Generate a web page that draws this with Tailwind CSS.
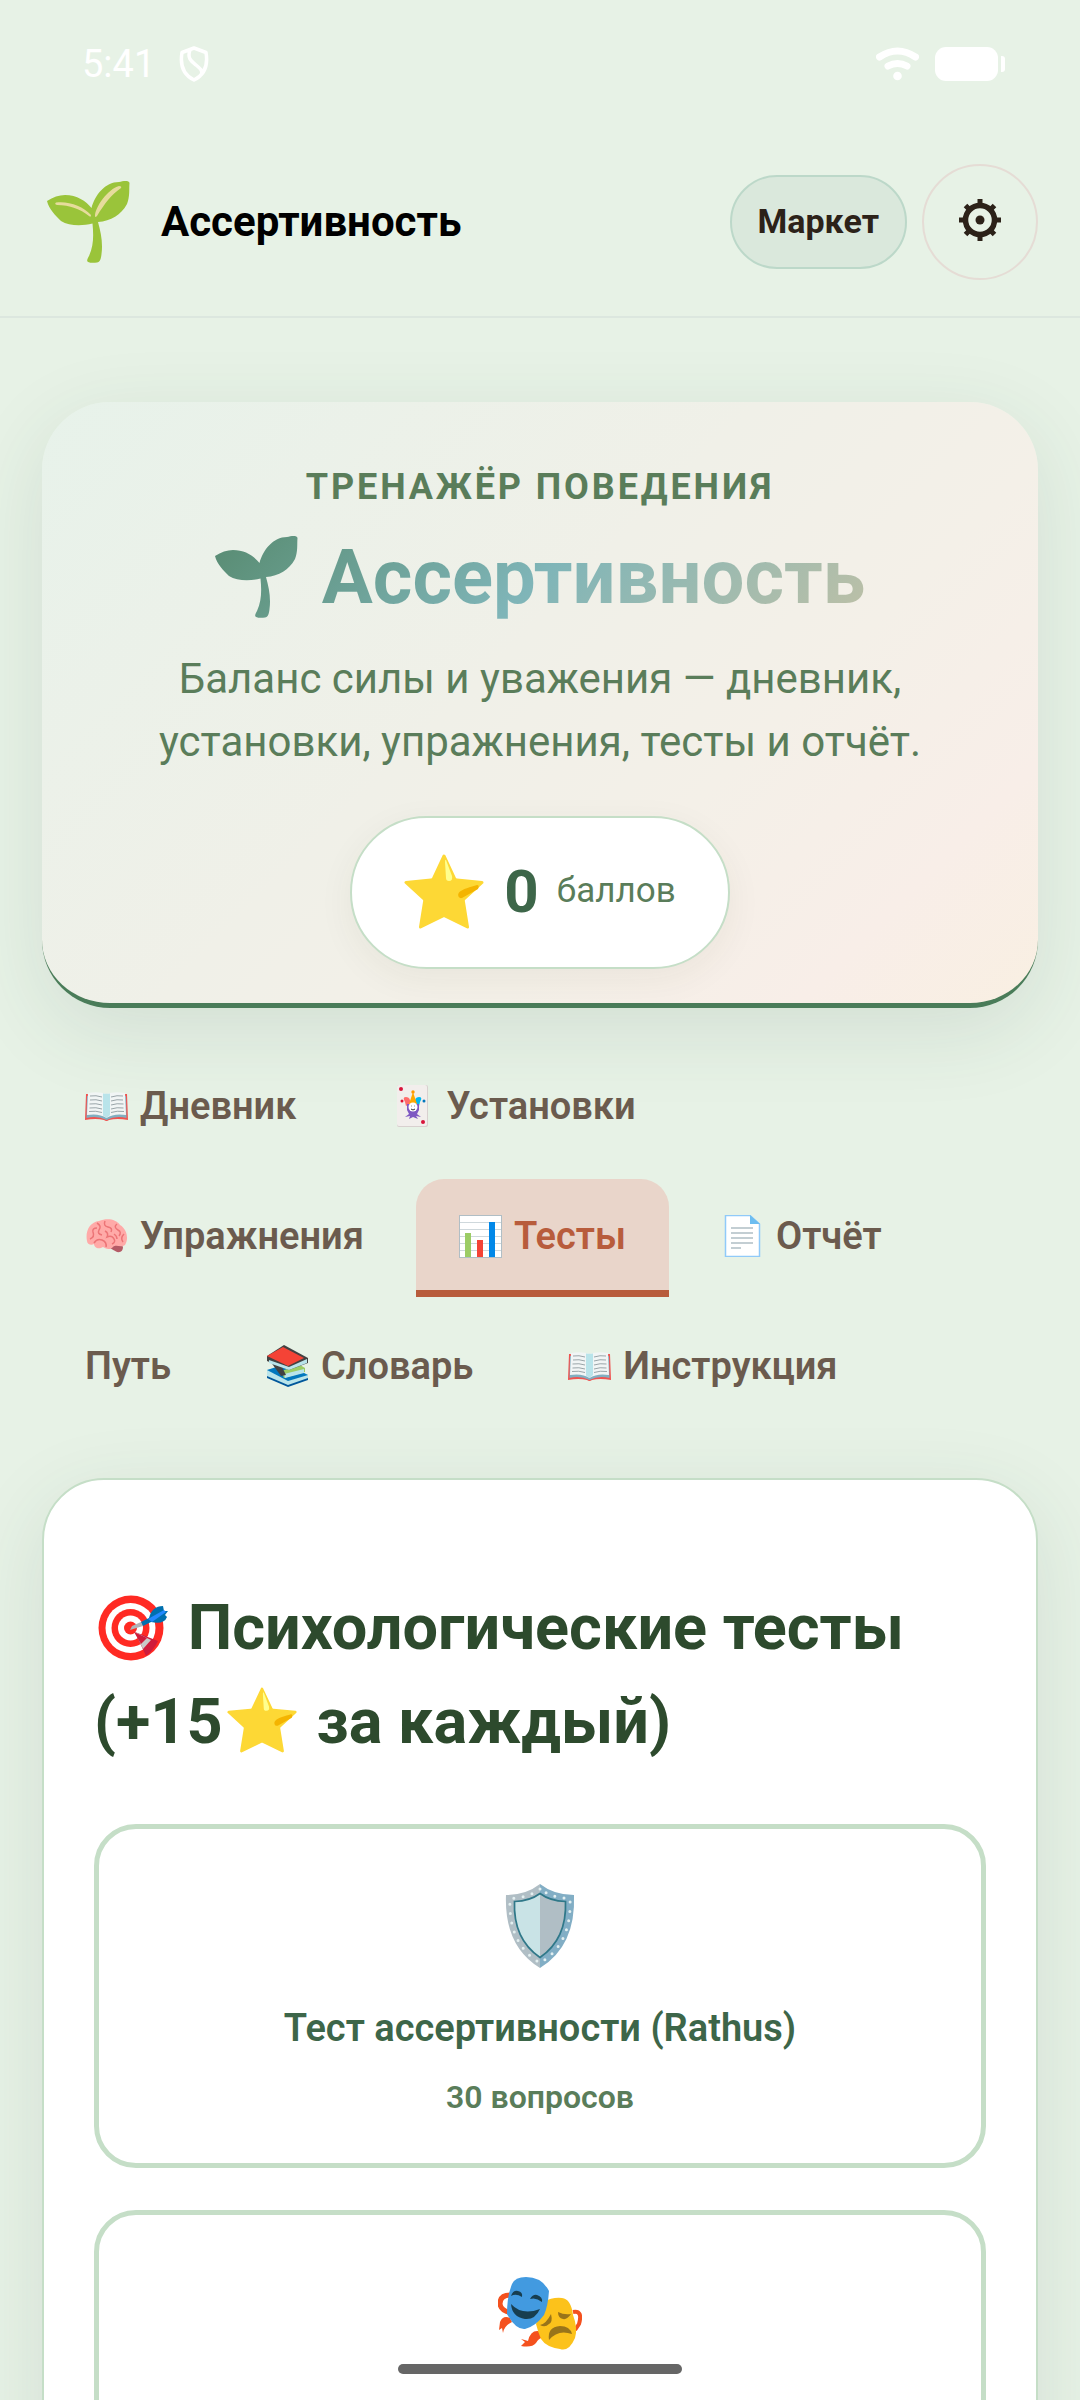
<!DOCTYPE html>
<html lang="ru">

<head>
  <meta charset="UTF-8" />
  <meta name="viewport" content="width=device-width, initial-scale=1.0" />
  <title>Ассертивность</title>
  <script src="https://cdn.jsdelivr.net/npm/@tailwindcss/browser@4"></script>
</head>

<body class="bg-[#e7f2e6] font-['Roboto',sans-serif]">

  <!-- shared icons -->
  <svg class="hidden" aria-hidden="true">
    <symbol id="sprout" viewBox="0 0 83 82">
      <path d="M0 20C6 16 12 14 18 14C30 14 39 20 44.500 27C48 14 58 1 72 1C76 0 82 -1 82.500 2C82 8 83 16 80 23C74 34 64 40 51 41C54 52 56 62 54.500 73C54 78 53 81 50 81.500C47 82 43 82 41 81C39 80 41 77 42 75C47 64 46.500 53 45.500 42.500C35 45 22 45 14 40C8 34 2 28 0 20Z" />
    </symbol>
    <symbol id="star" viewBox="0 0 80 75">
      <path d="M40 2L50.500 24.500Q51 26 53 26L78 28.500L60 45Q59 46 59.500 48L63.500 73L40 61.500L16.500 73L20.500 48Q21 46 20 45L2 28.500L27 26Q29 26 29.500 24.500Z" fill="#fdd835" stroke="#fdd835" stroke-width="3" stroke-linejoin="round" />
      <path d="M42 6L48 22Q49 27 45 27Q42 27 42 24L41 8Q41 5 42 6Z" fill="#ffff8d" />
      <path d="M73 31C75 31 75 33 74 35L58 44C55 45 53 41 55 38.500C58 35 67 33 73 31Z" fill="#f4b400" />
    </symbol>
    <symbol id="book" viewBox="0 0 43 29">
      <path d="M1 2H42L43 28Q32 26 24 28Q21.500 30 19 28Q11 26 0 28Z" fill="#ef5350" />
      <path d="M2 4L1.500 26Q12 23 21.500 28Q31 23 41.500 26L41 4L22 8Z" fill="#82aec0" />
      <path d="M3 1Q14 -1 21.500 2Q29 -1 40 1L41 23Q29 21 21.500 26Q14 21 2 23Z" fill="#f1f5f5" />
      <path d="M18 1.500Q21.500 2 25 1.500V23L21.500 26L18 23.500Z" fill="#b9e4ea" />
      <path d="M5 4Q11 3 17 5M5 8Q11 7 17 9M4.500 12Q11 11 17 13M4.500 16Q11 15 17 17M4 19.500Q11 18.500 17 20.500M38 4Q32 3 26 5M38 8Q32 7 26 9M38.500 12Q32 11 26 13M38.500 16Q32 15 26 17M39 19.500Q32 18.500 26 20.500" fill="none" stroke="#9aa5a9" stroke-width="1" />
    </symbol>
  </svg>

  <div class="h-screen overflow-hidden flex flex-col">

    <!-- status bar -->
    <div class="shrink-0 h-32 flex items-center justify-between pl-[82px] pr-[75px] text-white">
      <div class="flex items-center gap-6 text-[38px]">
        <span>5:41</span>
        <svg class="w-[30px] h-9" viewBox="0 0 30 36" fill="none" stroke="currentColor" stroke-width="3.500" stroke-linejoin="round" stroke-linecap="round">
          <path d="M15 2L3 6.500C1 18 3 28 15 34C27 28 29 18 27 6.500ZM11 4C8 12 12 15 17 19C22 23 24 25 22 29" />
        </svg>
      </div>
      <div class="flex items-center gap-4">
        <svg class="w-[43px] h-[34px]" viewBox="0 0 43 34" fill="none" stroke="currentColor" stroke-width="7" stroke-linecap="round">
          <path d="M3.500 10Q21.500 -2 39.500 10M12 19Q21.500 14 31 19" />
          <circle cx="21.500" cy="29" r="4.300" fill="currentColor" stroke="none" />
        </svg>
        <svg class="w-[70px] h-[34px]" viewBox="0 0 70 34" fill="currentColor">
          <rect width="63" height="34" rx="11" />
          <path d="M66 9H67Q70 9 70 12V22Q70 25 67 25H66Z" />
        </svg>
      </div>
    </div>

    <header class="shrink-0 flex items-center justify-between pl-[47px] pr-[42px] py-9 border-b-2 border-[#dce7df]">
      <div class="flex items-center gap-[31px]">
        <svg class="w-[83px] h-[82px]" viewBox="0 0 83 82">
          <use href="#sprout" fill="#9ac43a" />
          <path d="M9 21.500C22 20 36 25 44 34Q44 37 42 35C33 28 23 24 10 24Q7 23 9 21.500ZM48 35C48 26 61 8 72 5Q75 5 74 7C64 14 58 22 50 35Q48 37 48 35Z" fill="#e6dc9c" />
        </svg>
        <span class="pb-[2px] text-[42px] font-bold text-black">Ассертивность</span>
      </div>
      <div class="flex items-center gap-[15px]">
        <button class="h-[94px] px-[26px] pb-[2px] rounded-full border-2 border-[#bcd8c9] bg-[#dae8dc] text-[34px] font-bold text-[#2c2219]">Маркет</button>
        <button class="size-[116px] pb-1 rounded-full border-2 border-[#e5dcd5] flex items-center justify-center" aria-label="Настройки">
          <svg class="size-[42px]" viewBox="-21 -21 42 42" fill="none" stroke="#2c2219">
            <circle r="14.500" stroke-width="5.500" />
            <circle r="4.500" fill="#2c2219" stroke="none" />
            <path d="M0 -21V-15M0 21V15M-21 0H-15M21 0H15M-14.500 -14.500L-11 -11M14.500 -14.500L11 -11M-14.500 14.500L-11 11M14.500 14.500L11 11" stroke-width="5" />
          </svg>
        </button>
      </div>
    </header>

    <main class="px-[42px] pt-[84px]">

      <section class="px-[42px] pt-[58px] pb-[34px] rounded-[68px] border-b-5 border-[#4a7c59] bg-[linear-gradient(135deg,#e7f2ea_0%,#f0f0e8_45%,#f4f0e8_66%,#f8eee8_85%,#f9efe2_100%)] shadow-[0_22px_84px_rgba(45,74,62,0.11)] text-center text-[#5a7d5a]">
        <p class="text-4xl leading-[54px] font-bold uppercase tracking-[0.08em]">Тренажёр поведения</p>
        <h1 class="mt-[17px] flex items-center justify-center gap-6 text-[76px] leading-[92px] font-bold text-transparent bg-clip-text bg-[linear-gradient(135deg,#4a7c59_0%,#7fb5b8_50%,#d4c4a0_100%)]">
          <svg class="w-[83px] h-[82px]" viewBox="0 0 83 82">
            <defs>
              <linearGradient id="leaf" x1="0" y1="0" x2="1" y2="1">
                <stop offset="0" stop-color="#588b72" />
                <stop offset="1" stop-color="#6a9f90" />
              </linearGradient>
            </defs>
            <use href="#sprout" fill="url(#leaf)" />
          </svg>
          Ассертивность
        </h1>
        <p class="mt-6 text-[42px] leading-[63px]">Баланс силы и уважения — дневник,<br>установки, упражнения, тесты и отчёт.</p>
        <div class="mt-[43px] inline-flex items-center h-[153px] px-[52px] pb-[2px] rounded-full border-2 border-[#c5dec7] bg-white shadow-[0_10px_36px_rgba(74,60,40,0.06)] align-top">
          <svg class="w-20 h-[75px] mr-5"><use href="#star" /></svg>
          <span class="mr-[18px] text-[60px] font-bold text-[#3d6649]">0</span>
          <span class="text-[35px]">баллов</span>
        </div>
      </section>

      <nav class="mt-[41px] flex flex-wrap gap-x-[9px] gap-y-3 text-[38px] leading-[54px] font-semibold text-[#6b5b4e]">
        <button class="flex items-center gap-3 px-[43px] pt-[30px] pb-[34px]">
          <svg class="w-[43px] h-[29px]"><use href="#book" /></svg>
          Дневник
        </button>
        <button class="flex items-center gap-3 px-[43px] pt-[30px] pb-[34px]">
          <svg class="w-[43px] h-[42px]" viewBox="0 0 43 42">
            <rect x="6" width="31" height="42" rx="2" fill="#d8d0cf" />
            <rect x="6" width="30" height="41" rx="2" fill="#f2eeec" />
            <circle cx="10" cy="4" r="2" fill="#d8143a" />
            <circle cx="32" cy="37" r="2" fill="#d8143a" />
            <path d="M14 17Q11 12 15 12Q20 12 19 19L15 21Z" fill="#ff6b6b" />
            <path d="M29 17Q32 12 28 12Q23 12 24 19L28 21Z" fill="#00b8f0" />
            <path d="M18 19L22 7L26 19Z" fill="#ffa800" />
            <circle cx="11" cy="16" r="1.500" fill="#e01030" />
            <circle cx="33" cy="16" r="1.500" fill="#0277bd" />
            <circle cx="22" cy="7" r="1.700" fill="#ff9800" />
            <path d="M16 19H28V25L26 29L30 32L25 31L27 34L22 32L18 34L19 31L14 32L18 29L16 25Z" fill="#7e57c2" />
            <circle cx="22" cy="22" r="4.500" fill="#fff" />
            <path d="M20 21H20.500M23.500 21H24M20 24Q22 26 24 24" stroke="#333" fill="none" />
          </svg>
          Установки
        </button>
        <button class="flex items-center gap-3 px-[43px] pt-[30px] pb-[34px]">
          <svg class="w-[43px] h-[34px]" viewBox="0 0 43 34">
            <path d="M25 26Q35 22 38 28Q38 34 32 33Q28 31 25 29Z" fill="#b55b66" />
            <path d="M2 22C0 12 5 3 14 2C22 -1 31 0 35 6C42 10 44 20 40 26C36 29 31 25 28 28C24 32 20 29 18 28C13 31 9 28 9 25C6 27 2 25 2 22Z" fill="#ffaaa8" />
            <path d="M5 20Q10 18 8 13Q7 9 12 9M12 4Q17 7 14 11Q12 15 17 16M20 2Q18 7 23 8Q28 9 26 13M32 5Q28 8 33 11Q37 13 34 17M39 15Q35 19 38 23M9 24Q12 19 17 21Q22 23 21 28M20 12Q24 14 22 18Q27 16 29 20Q31 23 27 25M29 15Q32 17 32 20" fill="none" stroke="#ec7476" stroke-width="1.500" />
          </svg>
          Упражнения
        </button>
        <button class="flex items-center gap-3 px-[43px] pt-[30px] pb-[27px] border-b-7 border-[#b85c3c] rounded-t-[28px] bg-[#e9d5ca] text-[#b85c3c]">
          <svg class="size-[43px]" viewBox="0 0 43 43">
            <rect x="0.500" y="0.500" width="42" height="42" fill="#fff" stroke="#b0bec5" />
            <path d="M1 7.500H42M1 14.500H42M1 21.500H42M1 28.500H42M1 35.500H42" stroke="#cfd8dc" />
            <path d="M6 18H12V42H6Z" fill="#9ccc65" />
            <path d="M18 25H24V42H18Z" fill="#f44336" />
            <path d="M30 7H36V42H30Z" fill="#0288e8" />
          </svg>
          Тесты
        </button>
        <button class="flex items-center gap-3 px-[43px] pt-[30px] pb-[34px]">
          <svg class="w-[43px] h-[42px]" viewBox="0 0 43 42">
            <path d="M4.500 0.500H29L38.500 9V41.500H4.500Z" fill="#fff" stroke="#90caf9" stroke-width="1.500" />
            <path d="M29 0L39 9H29Z" fill="#6cbdf0" />
            <path d="M10 13H32M10 18H32M10 23H32M10 28H32M10 33H20" stroke="#b0bec5" stroke-width="1.500" />
          </svg>
          Отчёт
        </button>
        <button class="px-[43px] pt-[30px] pb-[34px]">Путь</button>
        <button class="flex items-center gap-3 px-[43px] pt-[30px] pb-[34px]">
          <svg class="w-[43px] h-[42px]" viewBox="0 0 43 42">
            <path d="M1 25L20 19L42 30V34L23 41L1 31Z" fill="#b9e4ea" />
            <path d="M1 25L20 19L42 30L22 36Z" fill="#0277bd" />
            <path d="M1 31L22 40L42 33V35L22 42L1 33Z" fill="#01579b" />
            <path d="M15 26L34 20L39 23V27L18 33Z" fill="#9ccc65" />
            <path d="M18 29L38 24V28L19 33Z" fill="#b9e4ea" />
            <path d="M4 16L14 18L20 30L15 31Z" fill="#424242" />
            <path d="M1 11L18 0L42 13V18L23 25L1 16Z" fill="#424242" />
            <path d="M3 15L23 22L41 14V18L23 25L3 18Z" fill="#b9e4ea" />
            <path d="M1 11L17 2L38 13L22 21Z" fill="#f44336" />
          </svg>
          Словарь
        </button>
        <button class="flex items-center gap-3 px-[43px] pt-[30px] pb-[34px]">
          <svg class="w-[43px] h-[29px]"><use href="#book" /></svg>
          Инструкция
        </button>
      </nav>

      <section class="mt-[51px] px-[50px] pt-[101px] pb-[50px] rounded-[62px] border-2 border-[#c5dec7] bg-white shadow-[0_22px_84px_rgba(45,74,62,0.11)]">
        <h2 class="text-[63px] leading-[94px] font-bold text-[#2d4a2d]">
          <svg class="inline-block w-[70px] h-[66px] mx-1 align-[-12px]" viewBox="0 0 70 66">
            <circle cx="33" cy="33" r="32.500" fill="#ff2a23" />
            <circle cx="32.500" cy="33" r="25" fill="#fff" />
            <circle cx="32.500" cy="33" r="19" fill="#ff2a23" />
            <circle cx="32.500" cy="33" r="12.500" fill="#fff" />
            <circle cx="32.500" cy="33" r="6.500" fill="#ff2a23" />
            <path d="M37 37L60 46Q56 55 48 61Z" fill="#cf1b3b" />
            <path d="M37 37L53 45L45 54Z" fill="#c9c9c9" />
            <path d="M36 37L49 43L43 49Z" fill="#cf1b3b" />
            <path d="M32 35L34 31L43 27L45 31Z" fill="#b0b4b8" />
            <path d="M43 27L51 23Q54 11 65 11L66 16L70 16L67 20L69 22Q66 30 53 27L45 31Z" fill="#006fae" />
            <path d="M50 24L66 15L68 17L54 27Z" fill="#2289ff" />
          </svg>
          Психологические тесты<br>(+15<svg class="inline-block w-[70px] h-[66px] mx-1 align-[-10px]"><use href="#star" /></svg> за каждый)
        </h2>

        <div class="mt-[55px] flex flex-col gap-[42px]">
          <button class="flex flex-col items-center pt-[55px] pb-[42px] border-5 border-[#c5dec7] rounded-[42px]">
            <svg class="size-[84px]" viewBox="0 0 84 84">
              <path d="M42 0Q28 11 8 11Q6 62 42 84Z" fill="#b0bec5" />
              <path d="M42 0Q56 11 76 11Q78 62 42 84Z" fill="#82aec5" />
              <path d="M42 9.500Q32 17 16.500 17.500Q15 55 42 73.500Z" fill="#c9e3e6" />
              <path d="M42 9.500Q52 17 67.500 17.500Q69 55 42 73.500Z" fill="#b0bec5" />
              <path d="M42 9.500Q32 17 16.500 17.500Q15 55 42 73.500Q69 55 67.500 17.500Q52 17 42 9.500Z" fill="none" stroke="#2f7889" stroke-width="1.700" />
              <path d="M42 5Q30 14 12 14.500Q10 60 42 79Q74 60 72 14.500Q54 14 42 5Z" fill="none" stroke="#e3eff0" stroke-width="3" stroke-linecap="round" stroke-dasharray="0 9.400" />
            </svg>
            <span class="mt-8 text-[38px] leading-[57px] font-semibold text-[#3d6649]">Тест ассертивности (Rathus)</span>
            <span class="mt-4 text-[32px] leading-[48px] font-semibold text-[#5a7d5a]">30 вопросов</span>
          </button>
          <button class="flex flex-col items-center pt-[57px] pb-[148px] border-5 border-[#c5dec7] rounded-[42px]" aria-label="Тест">
            <svg class="size-[84px]" viewBox="0 0 84 84">
              <path d="M12 24Q2 24 2 33Q3 40 14 42" transform="translate(0 -1)" fill="none" stroke="#f4511e" stroke-width="5" />
              <path d="M75 40Q85 38 81 52L77 58" fill="none" stroke="#f4511e" stroke-width="4" />
              <path d="M2 50Q5 43 12 46L14 50Q6 54 5 61L4 56L1 58Z" fill="#f4511e" />
              <path d="M44 60Q33 56 30 69Q27 68 23 67L27 70L23 74Q34 76 38 71Q41 66 44 66Z" fill="#f4511e" />
              <path d="M46 30Q54 25 64 26Q73 27 75 43Q80 56 77 66Q71 80 62 77Q48 75 43 67Q40 60 38 52Z" fill="#fcc21b" />
              <path d="M14 12Q17 5 28 5Q44 5 51 19Q50 34 46 43Q38 54 27 57Q18 58 9 42Q9 24 14 12Z" fill="#429ae0" />
              <path d="M13 24Q15 18 20 19Q25 20 24 25Q18 21 13 24ZM32 27Q35 22 39 23Q45 25 44 30Q38 25 32 27ZM13 32Q24 44 42 37Q37 48 27 47Q14 45 13 32Z" fill="#173e50" />
              <path d="M42 53Q48 52 53 42Q55 50 51 52Q47 56 42 53ZM60 40Q66 43 73 42Q69 48 65 47Q60 46 60 40ZM51 68Q49 55 62 54Q72 54 74 62Q60 57 51 68Z" fill="#99741a" />
            </svg>
          </button>
        </div>
      </section>
    </main>
  </div>

  <!-- gesture bar -->
  <div class="fixed bottom-[26px] left-1/2 -translate-x-1/2 w-[284px] h-[10px] rounded-full bg-[#666]"></div>

</body>

</html>
